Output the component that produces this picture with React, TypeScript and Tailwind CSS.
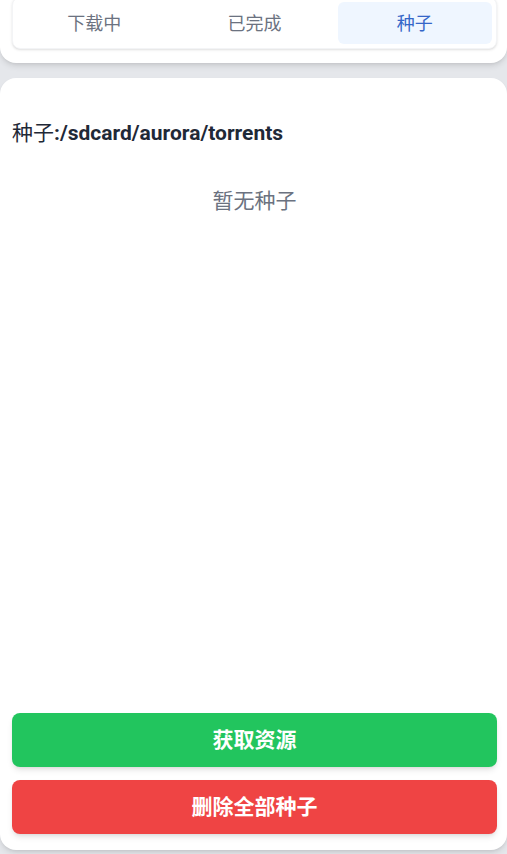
import { useState } from "react";

const tabs = ["下载中", "已完成", "种子"];

export default function App() {
  const [active, setActive] = useState(2);

  return (
    <main
      className="h-[854px] flex flex-col bg-[#e5e7eb] overflow-hidden"
      style={{ fontFamily: "Roboto, 'Noto Sans CJK SC', sans-serif" }}
    >
      <div className="bg-white rounded-b-2xl shadow-md pl-3 pr-[10px] pb-[14px] h-[63px] shrink-0">
        <div className="-mt-[3px] h-[52px] rounded-lg bg-white border border-gray-100 shadow-sm p-[4px] grid grid-cols-3 gap-[6px]">
          {tabs.map((t, i) => (
            <button
              key={t}
              onClick={() => setActive(i)}
              className={
                i === active
                  ? "rounded-md bg-[#eff6ff] text-[#3566c8] text-[18px] pt-px"
                  : "rounded-md text-[#6b7280] text-[18px] pt-px"
              }
            >
              {t}
            </button>
          ))}
        </div>
      </div>

      <div className="mt-[15px] h-[772px] bg-white rounded-2xl shadow-md pl-3 pr-[10px] pb-4 flex flex-col">
        <p className="pt-[41px] text-[21px] leading-[28px] text-[#1f2937]">
          <span>种子</span>
          <span className="font-bold">:/sdcard/aurora/torrents</span>
        </p>

        <p className="mt-[40px] text-center text-[21px] leading-[28px] text-[#6b7280]">
          暂无种子
        </p>

        <div className="mt-auto flex flex-col gap-[13px]">
          <button className="h-[54px] pt-[2px] rounded-lg bg-[#22c55e] text-white font-bold text-[21px] shadow-md">
            获取资源
          </button>
          <button className="h-[54px] pt-[2px] rounded-lg bg-[#ef4444] text-white font-bold text-[21px] shadow-md">
            删除全部种子
          </button>
        </div>
      </div>
    </main>
  );
}
